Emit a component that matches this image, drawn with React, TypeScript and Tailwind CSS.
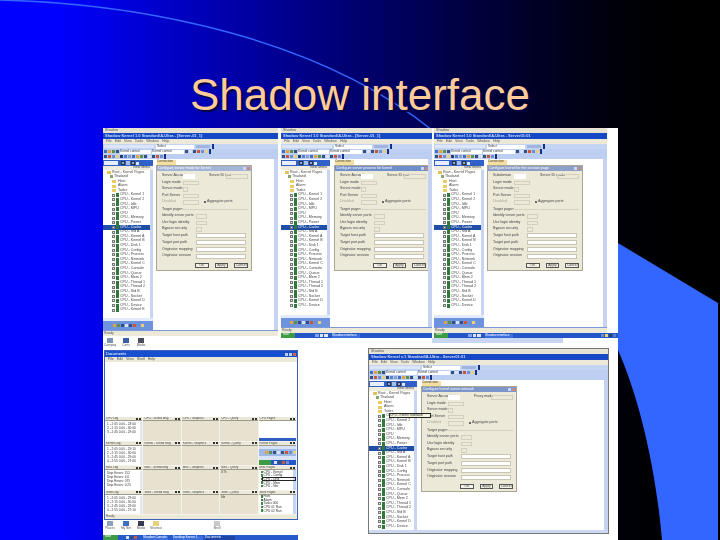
import React from "react";

const NAMES = [
  "CPU - Kernel 1", "CPU - Kernel 2", "CPU - Idle", "CPU - MPU", "CPU", "CPU - Memory",
  "CPU - Power", "CPU - Cache", "CPU - Std A", "CPU - Kernel A", "CPU - Kernel B", "CPU - Disk 1",
  "CPU - Config", "CPU - Process", "CPU - Network", "CPU - Kernel C", "CPU - Console", "CPU - Queue",
  "CPU - Mem 2", "CPU - Thread 1", "CPU - Thread 2", "CPU - Std B", "CPU - Socket", "CPU - Kernel D",
  "CPU - Device", "CPU - Kernel E",
];

const TOOLCOLORS = [
  "bg-[#3f6fc4]", "bg-[#e2a33c]", "bg-[#5b8f4a]", "bg-[#30507f]", "bg-[#d8e2f6]", "bg-[#37507f]",
  "bg-[#c9573c]", "bg-[#6d8fd0]", "bg-[#e7d27a]", "bg-[#2a3f6e]", "bg-[#4f7fd0]", "bg-[#8a9fc9]",
];

function Icons({ n, start = 0 }: { n: number; start?: number }) {
  return (
    <div className="flex items-center gap-[1px]">
      {Array.from({ length: n }).map((_, i) => (
        <div key={i} className={`w-[3px] h-[3px] shrink-0 ${TOOLCOLORS[(i + start) % TOOLCOLORS.length]}`} />
      ))}
    </div>
  );
}

function Handle() {
  return <div className="w-[2px] h-[5px] bg-[#12308a] shrink-0" />;
}

function Toolbars() {
  return (
    <div className="flex flex-col bg-[#bccef1] shrink-0 h-[15px] text-[3.2px] leading-none text-[#333]">
      <div className="h-[5px] flex items-center gap-[2px] pl-[1px] bg-[#c4d4f3]">
        <div className="w-[50px] h-[3px] bg-[#dde6f8]" />
        <div className="w-[38px] h-[4px] bg-white pl-[1px] whitespace-nowrap">Select</div>
        <div className="w-[14px] h-[3px] bg-[#9fb4de]" />
        <Handle />
      </div>
      <div className="h-[5px] flex items-center gap-[1px] pl-[1px]">
        <Icons n={4} />
        <div className="w-[31px] h-[4px] bg-white whitespace-nowrap">Kernel control</div>
        <div className="w-[32px] h-[4px] bg-white whitespace-nowrap">Kernel control</div>
        <Icons n={6} start={3} />
        <Handle />
      </div>
      <div className="h-[5px] flex items-center gap-[1px] pl-[1px]">
        <Icons n={15} start={5} />
        <Handle />
      </div>
    </div>
  );
}

function Tree({ selected, rows }: { selected: number; rows: number }) {
  const folders = ["Host", "Alarm", "Tasks"];
  return (
    <div className="flex-1 min-h-0 overflow-hidden bg-white text-[3.6px] leading-none text-[#444] whitespace-nowrap">
      <div className="h-[4.6px] flex items-center gap-[1px] pl-[4px]">
        <div className="w-[4px] h-[3px] bg-[#e4c35a]" />
        <span>Root - Kernel Pages</span>
      </div>
      <div className="h-[4.6px] flex items-center gap-[1px] pl-[7px]">
        <div className="w-[3px] h-[3px] bg-[#8aa36a]" />
        <span>Thailand</span>
      </div>
      {folders.map((f) => (
        <div key={f} className="h-[4.6px] flex items-center gap-[2px] pl-[9px]">
          <div className="w-[4px] h-[3px] bg-[#e9cc62]" />
          <span>{f}</span>
        </div>
      ))}
      {NAMES.slice(0, rows).map((n, i) => {
        const sel = i === selected;
        return (
          <div
            key={n}
            className={`h-[4.6px] flex items-center gap-[1px] pl-[9px] ${sel ? "bg-[#1e4ea6] text-white" : ""}`}
          >
            <div className="w-[3px] h-[3px] border-[0.5px] border-[#777] bg-[#e8e8e8] shrink-0" />
            <div className="w-[3px] h-[4px] bg-[#2f7a3a] shrink-0" />
            <span>{n}</span>
          </div>
        );
      })}
    </div>
  );
}

function PaneHeader() {
  return (
    <>
      <div className="h-[6px] bg-[#2f61c9] flex items-center gap-[1px] pl-[1px] shrink-0">
        <div className="w-[14px] h-[4px] bg-[#e8eefb]" />
        <div className="w-[4px] h-[4px] ml-[2px] bg-[#8ea9de] border-[0.5px] border-[#333]" />
        <div className="w-[4px] h-[4px] bg-[#a8bce6]" />
        <div className="w-[4px] h-[4px] bg-[#8ea9de] border-[0.5px] border-[#333]" />
        <div className="w-[3px] h-[3px] bg-[#dfe7f7]" />
      </div>
      <div className="h-[4px] bg-[#efecdf] text-[3.5px] leading-none text-right pr-[3px] text-[#444] shrink-0">
        View Menu
      </div>
    </>
  );
}

function Label({ children, w }: { children: React.ReactNode; w: string }) {
  return <div className={`${w} shrink-0 text-[3.6px] leading-none text-[#444] whitespace-nowrap`}>{children}</div>;
}

const rowCls = "flex items-center h-[6.5px] shrink-0";
const boxCls = "border-[0.5px] border-[#d2cfbd] h-[4.5px]";

function Dialog({ title, bar, first, second }: { title: string; bar: string; first: string; second: string }) {
  return (
    <div className="w-[96px] h-[106px] shrink-0 bg-[#ece9d8] border border-[#a9a794] overflow-hidden flex flex-col">
      <div className={`h-[5px] ${bar} flex items-center px-[1px] shrink-0 text-[3.6px] leading-none text-white whitespace-nowrap`}>
        <span className="flex-1">{title}</span>
        <div className="w-[3px] h-[3px] bg-[#c9d6f0]" />
        <div className="w-[3px] h-[3px] ml-[1px] bg-[#c98a80]" />
      </div>
      <div className="flex flex-col pl-[5px] pr-[3px] pt-[2px]">
        <div className={rowCls}>
          <Label w="w-[21px]">{first}</Label>
          <div className="w-[12px] h-[5px] bg-white" />
          <div className="w-[14px]" />
          <Label w="w-[17px]">{second}</Label>
          <div className={`flex-1 ${boxCls}`} />
        </div>
        <div className={rowCls}>
          <Label w="w-[21px]">Login mode</Label>
          <div className={`w-[16px] ${boxCls}`} />
        </div>
        <div className={rowCls}>
          <Label w="w-[21px]">Server mode</Label>
          <div className={`w-[5px] ${boxCls}`} />
        </div>
        <div className={rowCls}>
          <Label w="w-[21px]">Port Server</Label>
          <div className={`w-[16px] ${boxCls}`} />
        </div>
        <div className={rowCls}>
          <Label w="w-[21px]"><span className="text-[#a9a794]">Disabled</span></Label>
          <div className={`w-[16px] ${boxCls}`} />
          <div className="w-[2px] h-[2px] ml-[5px] mr-[1px] border-[0.5px] border-[#666] bg-white" />
          <Label w="w-[24px]">Aggregate ports</Label>
        </div>
        <div className="flex items-center h-[6.5px] mt-[1px] shrink-0">
          <Label w="w-[19px]">Target pages</Label>
          <div className="flex-1 h-[1px] bg-[#d5d2c0]" />
        </div>
        {LABELS.slice(0, 3).map((l, i) => (
          <div key={l} className={rowCls}>
            <Label w="w-[34px]">{l}</Label>
            <div className={`${i === 2 ? "w-[6px]" : "w-[11px]"} ${boxCls}`} />
          </div>
        ))}
        {LABELS.slice(3).map((l) => (
          <div key={l} className="flex items-center h-[6.8px] shrink-0">
            <Label w="w-[34px]">{l}</Label>
            <div className="w-[50px] h-[5px] bg-white border-[0.5px] border-[#c8c5b4]" />
          </div>
        ))}
        <div className="flex gap-[6px] mt-[3px] pl-[33px]">
          {["OK", "Apply", "Cancel"].map((b) => (
            <div key={b} className="w-[15px] h-[5px] bg-[#f3f1e6] border-[0.5px] border-[#555] text-[3.4px] leading-none text-center text-[#444]">
              {b}
            </div>
          ))}
        </div>
      </div>
    </div>
  );
}

const LABELS = [
  "Identify server ports",
  "Use login identity",
  "Bypass security",
  "Target host path",
  "Target port path",
  "Originator mapping",
  "Originator session",
];

function Taskbar({ tray = false }: { tray?: boolean }) {
  return (
    <div className={`h-[5px] bg-[#2456c8] flex items-center shrink-0 text-[3.2px] leading-none text-white whitespace-nowrap ${tray ? "-mr-[11px]" : ""}`}>
      <div className="w-[14px] h-full bg-[#3d9a45] shrink-0 pl-[2px]">start</div>
      <div className="w-[20px]" />
      <div className="w-[4px] h-[3px] bg-[#7fa6e8]" />
      <div className="w-[3px] h-[3px] ml-[1px] bg-[#d9e4f8]" />
      <div className="w-[4px] h-[3px] ml-[1px] bg-[#e2e8f6]" />
      <div className="w-[28px] h-[4px] ml-[4px] bg-[#3b6fdc]">Shadow interface</div>
      {tray && (
        <div className="ml-auto flex items-center gap-[1px] pr-[2px]">
          <Icons n={4} start={7} />
        </div>
      )}
    </div>
  );
}

function Win({
  shell, paneW, pl, title, bar, dlgTitle, first, second, selected, rows, taskbar = false, tray = false, compact = false,
}: {
  shell: string; paneW: string; pl: string; title: string; bar: string; dlgTitle: string; first: string; second: string;
  selected: number; rows: number; taskbar?: boolean; tray?: boolean; compact?: boolean;
}) {
  return (
    <div className={`${shell} flex flex-col overflow-hidden`}>
      <div className="h-[5px] bg-[#e6e3d4] text-[3.6px] leading-none text-[#555] pl-[2px] pt-[1px] shrink-0">Shadow</div>
      <div className="h-[6px] bg-[#1448c4] text-[4px] leading-none font-bold text-[#cfdcfb] pl-[2px] flex items-center shrink-0 whitespace-nowrap">
        {title}
      </div>
      <div className="h-[5px] bg-[#ece9d8] text-[3.6px] leading-none text-[#555] flex items-center gap-[3px] pl-[3px] shrink-0">
        <span>File</span><span>Edit</span><span>View</span><span>Tools</span><span>Window</span><span>Help</span>
      </div>
      <Toolbars />
      <div className="flex-1 min-h-0 flex bg-white">
        <div className={`${paneW} flex flex-col pt-[1px] shrink-0`}>
          <PaneHeader />
          <div className="flex-1 min-h-0 flex">
            <Tree selected={selected} rows={rows} />
            <div className="w-[3px] bg-[#c7d5f2]" />
          </div>
          {!compact && <div className="h-[3px] bg-[#e3eafa] shrink-0" />}
          {!compact && (
            <div className="h-[9px] bg-[#6e93de] flex items-center justify-center shrink-0">
              <Icons n={8} start={1} />
            </div>
          )}
        </div>
        <div className={`flex-1 min-w-0 flex flex-col ${pl} pt-[1px]`}>
          <div className="ml-[1px] w-[19px] h-[5px] bg-[#f4dfa0] text-[3.2px] leading-none text-[#444] whitespace-nowrap shrink-0">Connection</div>
          <div className="overflow-hidden">
            <Dialog title={dlgTitle} bar={bar} first={first} second={second} />
          </div>
        </div>
        <div className="w-[4px] bg-[#c5d3f1] shrink-0" />
      </div>
      {compact ? (
        <div className="h-[3px] bg-[#cdd9f3] shrink-0" />
      ) : (
        <>
          <div className="h-[1px] bg-[#7d9ad8] shrink-0" />
          <div className="h-[5px] bg-[#ece9d8] text-[3.4px] leading-none text-[#555] pl-[1px] shrink-0 flex items-center">Ready</div>
        </>
      )}
      {taskbar && <Taskbar tray={tray} />}
    </div>
  );
}

function DesktopIcon({ color, label, cls }: { color: string; label: string; cls: string }) {
  return (
    <div className={`${cls} w-[14px] flex flex-col items-center shrink-0 text-[3.2px] leading-none text-[#555]`}>
      <div className={`w-[6px] h-[5px] ${color} mb-[1px]`} />
      <span className="whitespace-nowrap">{label}</span>
    </div>
  );
}

function Panel({ title, children, body = "bg-[#e6e2cf]" }: { title: string; children?: React.ReactNode; body?: string }) {
  return (
    <div className="flex flex-col min-h-0 min-w-0 overflow-hidden border-r border-b border-[#f5f3e9]">
      <div className="h-[4px] bg-[#ebe8d9] border-b-[0.5px] border-[#9d9b8b] flex items-center text-[3px] leading-none text-[#444] whitespace-nowrap px-[1px] shrink-0">
        <span className="flex-1">{title}</span>
        <div className="w-[2px] h-[2px] bg-[#333] ml-[1px]" />
        <div className="w-[2px] h-[2px] bg-[#333] ml-[1px]" />
      </div>
      <div className={`flex-1 min-h-0 ${body} text-[3.2px] leading-[4px] text-[#333]`}>{children}</div>
    </div>
  );
}

function Log({ lines }: { lines: string[] }) {
  return (
    <div className="h-full flex bg-white pl-[2px] pt-[1px]">
      <div className="flex-1 whitespace-nowrap">
        {lines.map((l) => <div key={l}>{l}</div>)}
      </div>
      <div className="w-[2px] bg-[#dfe5f3] shrink-0" />
    </div>
  );
}

const ROW_NAMES = ["CPU", "Kernel", "Misc", "Shell"];
const COLS = ["Sched Msg", "Graphics", "Query"];
const LOGS = [
  ["1 - 2:05 0.00 - 23:00", "2 - 2:15 0.00 - 30:00", "3 - 2:45 0.00 - 29:00"],
  ["1 - 2:05 0.00 - 29:10", "2 - 2:15 0.00 - 30:00", "3 - 2:45 0.00 - 29:00", "4 - 2:55 0.00 - 27:00"],
  ["Disp Errors: 152", "Disp Errors: 4.0", "Disp Errors: 075", "Disp Errors: 0.25"],
  ["1 - 2:05 0.00 - 29:00", "2 - 2:15 0.00 - 30:00", "3 - 2:45 0.00 - 29:00", "4 - 2:55 0.00 - 27:10"],
];

function TreeMini({ items, tip = false }: { items: string[]; tip?: boolean }) {
  return (
    <div className="h-full flex bg-white relative">
      <div className="flex-1 pl-[2px] whitespace-nowrap">
        {items.map((s) => (
          <div key={s} className="flex items-center gap-[1px] h-[3.6px]">
            <div className="w-[2px] h-[2.5px] bg-[#3c8a3c] shrink-0" />
            <span>{s}</span>
          </div>
        ))}
      </div>
      <div className="w-[3px] bg-[#c7d5f2] shrink-0" />
      {tip && <div className="absolute left-[3px] top-[7px] right-0 h-[4px] border-[0.5px] border-[#222]" />}
    </div>
  );
}

function DocWindow() {
  return (
    <div className="w-[194px] h-[170px] ml-[1px] border border-[#3b62b8] flex flex-col bg-white shrink-0 overflow-hidden">
      <div className="h-[6px] bg-[#1750cf] flex items-center text-[4px] leading-none text-white pl-[1px] shrink-0">
        <span className="flex-1">Documents</span>
        <div className="w-[3px] h-[3px] bg-[#bcd0f5] mr-[1px]" />
        <div className="w-[3px] h-[3px] bg-[#bcd0f5] mr-[1px]" />
        <div className="w-[3px] h-[3px] bg-[#d0664d] mr-[1px]" />
      </div>
      <div className="h-[5px] bg-[#ece9d8] flex items-center gap-[3px] pl-[3px] text-[3.6px] leading-none text-[#555] shrink-0">
        <span>File</span><span>Edit</span><span>View</span><span>Shell</span><span>Help</span>
      </div>
      <div className="h-[55px] bg-white shrink-0" />
      <div className="flex-1 min-h-0 grid grid-cols-5 grid-rows-4">
        {ROW_NAMES.map((r, i) => (
          <React.Fragment key={r}>
            <Panel title={`${r} Log`}><Log lines={LOGS[i]} /></Panel>
            {COLS.map((c, j) => (
              <Panel key={c} title={`${r} - ${c}`}>
                {j === 2 && i === 2 && <div className="pl-[1px]">0 %</div>}
                {j === 2 && i === 3 && <div className="pl-[1px]">file</div>}
              </Panel>
            ))}
            {i === 0 && (
              <Panel title={`${r} Pages`} body="bg-white">
                <div className="h-full flex flex-col justify-end"><div className="h-[3px] bg-[#2f5fc0]" /></div>
              </Panel>
            )}
            {i === 1 && (
              <Panel title={`${r} Pages`} body="bg-white">
                <div className="h-[3px] bg-[#d7e2f7]" />
                <div className="h-[7px] bg-[#9db9e8] flex items-center pl-[6px]"><Icons n={8} start={1} /></div>
                <div className="h-[4px] bg-[#d8e3f5]" />
                <div className="h-[6px] bg-[#2456c8] flex items-center">
                  <div className="w-[12px] h-full bg-[#3d9a45]" />
                  <div className="ml-[3px]"><Icons n={4} start={4} /></div>
                </div>
              </Panel>
            )}
            {i === 2 && <Panel title={`${r} Pages`}><TreeMini tip items={["CPU - Kernel", "CPU - Config", "CPU - Disk", "CPU - Mem", "CPU - Net"]} /></Panel>}
            {i === 3 && <Panel title={`${r} Pages`}><TreeMini items={["Host", "Alarm", "Tasks 000", "CPU 01 Run", "CPU 02 Run"]} /></Panel>}
          </React.Fragment>
        ))}
      </div>
      <div className="h-[4px] bg-[#ece9d8] text-[3px] leading-none text-[#555] pl-[1px] shrink-0">Ready</div>
    </div>
  );
}

export default function App() {
  return (
    <div className="relative w-[720px] h-[540px] overflow-hidden bg-gradient-to-r from-[#0000ff] from-[8%] to-black to-[99%] font-['Liberation_Sans',sans-serif]">
      <svg className="absolute inset-0" width="720" height="540" viewBox="0 0 720 540">
        <path d="M618 243 L718 303 L718 540 L662 540 C656 470 640 400 618 350 Z" fill="#3366ff" />
        <path d="M0 0 C150 4 320 40 432 130" fill="none" stroke="#3366ff" strokeWidth="1.5" />
      </svg>

      <div className="relative flex flex-col h-full">
        <h1 className="h-[128px] shrink-0 pt-[67px] text-center text-[44px] leading-[55px] font-normal text-[#ffcc99] [text-shadow:2px_2px_1px_#000044]">
          Shadow interface
        </h1>

        <div className="ml-[103px] w-[515px] flex-1 min-h-0 bg-white flex flex-col blur-[0.5px]">
          <div className="flex h-[210px] shrink-0">
            <Win
              shell="w-[175px] h-[208px] shrink-0"
              paneW="w-[50px]"
              pl="pl-[3px]"
              title="Shadow Kernel 1.0 Standard/A-Ultra - [Server-01_1]"
              bar="bg-[#a4b4d6]"
              dlgTitle="Configure server mode for kernel"
              first="Server Account"
              second="Server ID text"
              selected={7}
              rows={26}
            />
            <Win
              shell="w-[154px] h-[210px] shrink-0 pl-[3px]"
              paneW="w-[49px]"
              pl="pl-[4px]"
              title="Shadow Kernel 1.0 Standard/A-Ultra - [Server-01_1]"
              bar="bg-[#6f8fcb]"
              dlgTitle="Configure server process for kernel"
              first="Server Account"
              second="Server ID text"
              selected={7}
              rows={25}
              taskbar
            />
            <Win
              shell="w-[186px] h-[210px] shrink-0 pl-[2px] pr-[11px]"
              paneW="w-[50px]"
              pl="pl-[3px]"
              title="Shadow Kernel 1.0 Standard/A-Ultra - Server01:01"
              bar="bg-[#8c9fc8]"
              dlgTitle="Configure kernel for the session page"
              first="Subdomain"
              second="Server ID mode"
              selected={7}
              rows={25}
              taskbar
              tray
            />
          </div>

          <div className="flex-1 min-h-0 flex">
            <div className="w-[195px] flex flex-col shrink-0 overflow-hidden">
              <div className="h-[12px] flex shrink-0">
                <DesktopIcon cls="" color="bg-[#7f93b4]" label="Compaq" />
                <DesktopIcon cls="ml-[2px]" color="bg-[#3a5fa5]" label="Certs" />
                <DesktopIcon cls="ml-[1px]" color="bg-[#4a4f5a]" label="Media" />
              </div>
              <DocWindow />
              <div className="h-[15px] flex pt-[1px] shrink-0">
                <DesktopIcon cls="" color="bg-[#8fa0bb]" label="Places" />
                <DesktopIcon cls="ml-[2px]" color="bg-[#3a6fc0]" label="My Net" />
                <DesktopIcon cls="ml-[1px]" color="bg-[#343c4c]" label="Media" />
                <DesktopIcon cls="ml-[1px]" color="bg-[#e5d27f]" label="Shortcut" />
                <DesktopIcon cls="ml-[47px]" color="bg-[#c9c9c9]" label="Shell" />
              </div>
              <div className="h-[5px] bg-[#2559cc] flex items-center text-[3.2px] leading-none text-white whitespace-nowrap shrink-0">
                <div className="w-[15px] h-full bg-[#3d9a45] pl-[2px] shrink-0">start</div>
                <div className="w-[8px] shrink-0" />
                <Icons n={3} start={4} />
                <div className="w-[25px] h-[4px] ml-[6px] bg-[#3b6fdc] shrink-0">Shadow Console</div>
                <div className="w-[30px] h-[4px] ml-[5px] bg-[#3b6fdc] shrink-0">Desktop Server 1</div>
                <div className="w-[30px] h-[4px] ml-[2px] bg-[#1c47a8] shrink-0">Documents</div>
              </div>
            </div>

            <div className="flex-1 min-w-0 flex flex-col">
              <div className="h-[5px] ml-[134px] w-[131px] bg-[#c9d6f2] shrink-0" />
              <div className="ml-[70px] w-[241px] h-[186px] mt-[5px] border border-[#777] relative shrink-0">
                <Win
                  shell="w-full h-[184px]"
                  paneW="w-[48px]"
                  pl="pl-[4px]"
                  title="Shadow Kernel v.1 Standard/A-Ultra - Server01:01"
                  bar="bg-[#7d96c9]"
                  dlgTitle="Configure kernel server network"
                  first="Server Account"
                  second="Proxy mode"
                  selected={7}
                  rows={25}
                  compact
                />
                <div className="absolute left-[20px] top-[64px] w-[42px] h-[5px] bg-[#f6f3de] border-[0.5px] border-[#222] text-[3.2px] leading-none text-[#333] whitespace-nowrap">
                  CPU - Kernel Standard
                </div>
              </div>
            </div>
          </div>
        </div>
      </div>
    </div>
  );
}
